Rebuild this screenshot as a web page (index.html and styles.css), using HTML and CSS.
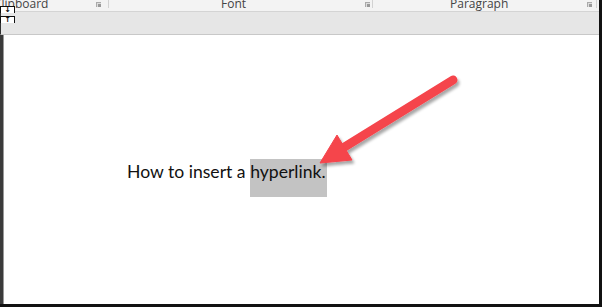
FILE: index.html
```html
<!doctype html>
<html lang="en">
<head>
    <meta charset="utf-8">
    <title>Insert a hyperlink</title>
    <link rel="stylesheet" href="styles.css">
</head>
<body>
    <div id="frame">
        <div id="ribbon-labels">
            <div class="group group-clipboard">
                <span class="label">Clipboard</span>
                <span class="launcher"></span>
            </div>
            <div class="group group-font">
                <span class="label">Font</span>
                <span class="launcher"></span>
            </div>
            <div class="group group-paragraph">
                <span class="label">Paragraph</span>
                <span class="launcher"></span>
            </div>
        </div>
        <div id="ruler-band"></div>
        <div id="page">
            <p class="doc-line">How to insert a <span class="selected">hyperlink.</span></p>
        </div>
        <div class="marker marker-down">&#x2193;</div>
        <div class="marker marker-up">&#x2191;</div>
        <svg id="arrow" width="602" height="307" viewBox="0 0 602 307">
            <defs>
                <filter id="shadow" x="-20%" y="-20%" width="140%" height="140%">
                    <feGaussianBlur in="SourceAlpha" stdDeviation="1.6"/>
                    <feOffset dx="2" dy="3" result="blur"/>
                    <feComponentTransfer><feFuncA type="linear" slope="0.35"/></feComponentTransfer>
                    <feMerge><feMergeNode/><feMergeNode in="SourceGraphic"/></feMerge>
                </filter>
            </defs>
            <g filter="url(#shadow)" fill="#f5444c" stroke="#f5444c">
                <line x1="453" y1="80" x2="338" y2="151" stroke-width="9" stroke-linecap="round"/>
                <polygon points="320,163 337,135 352,160" stroke-width="1" stroke-linejoin="round"/>
            </g>
        </svg>
    </div>
</body>
</html>
```

FILE: styles.css
```css
body {
    margin: 0;
    padding: 0;
    background-color: white;
}
#frame {
    position: relative;
    width: 602px;
    height: 307px;
    box-sizing: border-box;
    border-right: 3px solid #111;
    border-bottom: 3px solid #111;
    display: flex;
    flex-direction: column;
    overflow: hidden;
}
#ribbon-labels {
    display: flex;
    height: 11px;
    background-color: #f3f3f3;
    border-bottom: 1px solid #d4d4d4;
    font-family: 'Open Sans', sans-serif;
    font-size: 12px;
    color: #444;
}
.group {
    display: flex;
    align-items: flex-start;
    border-right: 1px solid #d2d2d2;
    height: 8px;
    box-sizing: border-box;
}
.label {
    line-height: 12px;
    margin-top: -2px;
    white-space: nowrap;
}
.launcher {
    width: 4px;
    height: 4px;
    margin-top: 2px;
    border-left: 1px solid #aaa;
    border-top: 1px solid #aaa;
    background-color: #999;
    box-shadow: inset 1px 1px 0 #ddd;
}
.group-clipboard {
    width: 109px;
}
.group-clipboard .label {
    margin-left: -6px;
    width: 102px;
}
.group-font {
    width: 264px;
}
.group-font .label {
    margin-left: 112px;
    width: 144px;
}
.group-paragraph {
    width: 224px;
}
.group-paragraph .label {
    margin-left: 77px;
    width: 137px;
}
#ruler-band {
    height: 22px;
    background-color: #e6e6e6;
    border-bottom: 1px solid #c8c8c8;
    border-left: 1px solid #333;
}
#page {
    flex: 1;
    background-color: white;
    border-left: 3px solid #3a3a3a;
    box-shadow: inset 1px 0 0 #999;
    font-family: 'Lato', sans-serif;
    font-size: 17.6px;
    color: #111;
}
.doc-line {
    margin: 0;
    padding-top: 124px;
    padding-left: 124px;
    line-height: 25px;
}
.selected {
    display: inline-block;
    background-color: #c3c3c3;
    line-height: 25px;
    padding-bottom: 13px;
    padding-right: 1px;
    vertical-align: top;
}
.marker {
    position: absolute;
    left: 0;
    width: 13px;
    height: 6px;
    background-color: white;
    border: 1px solid #111;
    font-family: 'DejaVu Sans', sans-serif;
    font-size: 8px;
    line-height: 6px;
    text-align: center;
    font-weight: bold;
}
.marker-down {
    top: 6px;
    border-bottom: none;
}
.marker-up {
    top: 16px;
    border-bottom: none;
}
#arrow {
    position: absolute;
    left: 0;
    top: 0;
    pointer-events: none;
}
```
